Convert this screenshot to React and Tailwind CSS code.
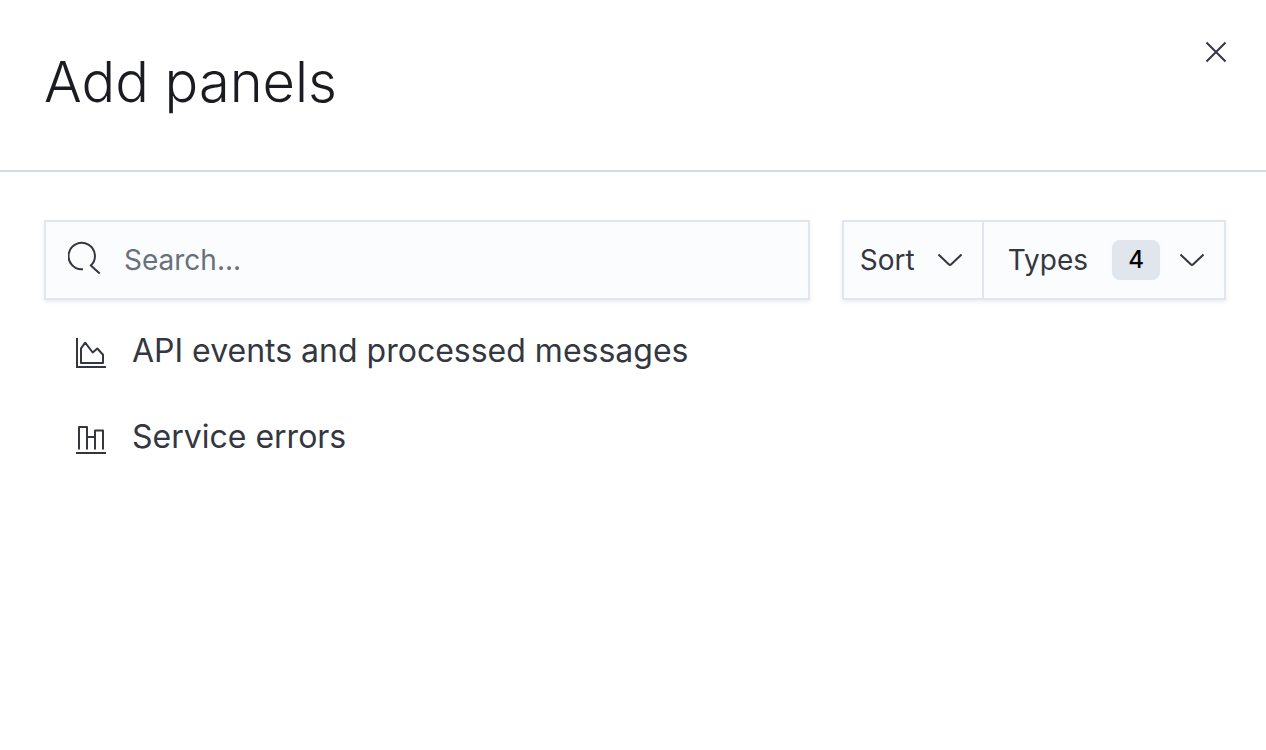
import { useState } from "react";

const PANELS = [
  { title: "API events and processed messages", Icon: AreaIcon },
  { title: "Service errors", Icon: BarIcon },
];

function CloseIcon() {
  return (
    <svg aria-hidden="true" className="size-8" viewBox="0 0 32 32" fill="none" stroke="currentColor" strokeWidth="2">
      <path d="M6.5 6.5 25.5 25.5M25.5 6.5 6.5 25.5" />
    </svg>
  );
}

function SearchIcon() {
  return (
    <svg aria-hidden="true" className="h-10 w-9 shrink-0" viewBox="0 0 36 40" fill="none" stroke="currentColor" strokeWidth="2" strokeLinejoin="round">
      <path d="M15 29.2H14.2A13.2 13.2 0 1 1 22.8 25.6L31.7 33.5" />
    </svg>
  );
}

function ChevronIcon() {
  return (
    <svg aria-hidden="true" className="h-4 w-6 shrink-0" viewBox="0 0 24 16" fill="none" stroke="currentColor" strokeWidth="2" strokeLinejoin="round">
      <path d="M.5 2.5 11 12.4Q12 13.3 13 12.4L23.5 2.5" />
    </svg>
  );
}

function AreaIcon() {
  return (
    <svg aria-hidden="true" className="h-9 w-8 shrink-0" viewBox="-1 -4 32 36" fill="none" stroke="currentColor" strokeWidth="2" strokeLinejoin="round">
      <path d="M2 1V30H31" strokeLinejoin="miter" />
      <path d="M6 26V11.3L10.2 5.7 17.7 15.5 22.3 11.5 28 17.7V26Z" />
    </svg>
  );
}

function BarIcon() {
  return (
    <svg aria-hidden="true" className="h-9 w-8 shrink-0" viewBox="-1 -4 32 36" fill="none" stroke="currentColor" strokeWidth="2" strokeLinejoin="round">
      <path d="M4 26.5V4H12V26.5M12 14H20M20 26.5V7.5H28V26.5M1 30H31" />
    </svg>
  );
}

export default function App() {
  const [query, setQuery] = useState("");
  const shown = PANELS.filter((p) => p.title.toLowerCase().includes(query.toLowerCase()));

  return (
    <main className="min-h-screen bg-white font-['Inter',sans-serif] text-[#343741]">
      <header className="flex items-start justify-between border-b-2 border-[#d3dae6] pt-9 pr-[34px] pb-[46px] pl-11">
        <h1 className="pt-1 text-[56px] leading-[84px] font-light text-[#1a1c21]">Add panels</h1>
        <button type="button" aria-label="Close" className="flex">
          <CloseIcon />
        </button>
      </header>

      <div className="pt-12 pr-10 pl-11">
        <div className="flex gap-8">
          <label className="flex h-20 min-w-0 flex-1 items-center gap-5 border-2 border-[#e0e5ee] bg-[#fbfcfd] pr-5 pl-[22px] shadow-[0_2px_4px_#98a2b333]">
            <SearchIcon />
            <input
              type="text"
              aria-label="Search panels"
              value={query}
              onChange={(e) => setQuery(e.target.value)}
              placeholder="Search..."
              className="min-w-0 flex-1 bg-transparent text-[28px] leading-10 outline-none placeholder:text-[#69707d]"
            />
          </label>
          <div className="flex h-20 border-2 border-[#e0e5ee] bg-[#fbfcfd] text-[28px] leading-10 shadow-[0_2px_4px_#98a2b333]">
            <button type="button" className="flex w-[140px] items-center justify-between border-r-2 border-[#e0e5ee] pr-5 pl-4">
              Sort
              <ChevronIcon />
            </button>
            <button type="button" className="flex items-center pr-5 pl-6">
              Types
              <span className="mr-5 ml-6 flex h-10 w-12 items-center justify-center rounded-lg bg-[#e0e5ee] text-2xl font-medium text-black">
                4
              </span>
              <ChevronIcon />
            </button>
          </div>
        </div>

        <ul className="pt-2 pl-[30px]">
          {shown.map(({ title, Icon }) => (
            <li key={title}>
              <button type="button" className="flex h-[86px] w-full items-center gap-[26px] text-left text-[32px]">
                <Icon />
                {title}
              </button>
            </li>
          ))}
        </ul>
      </div>
    </main>
  );
}
